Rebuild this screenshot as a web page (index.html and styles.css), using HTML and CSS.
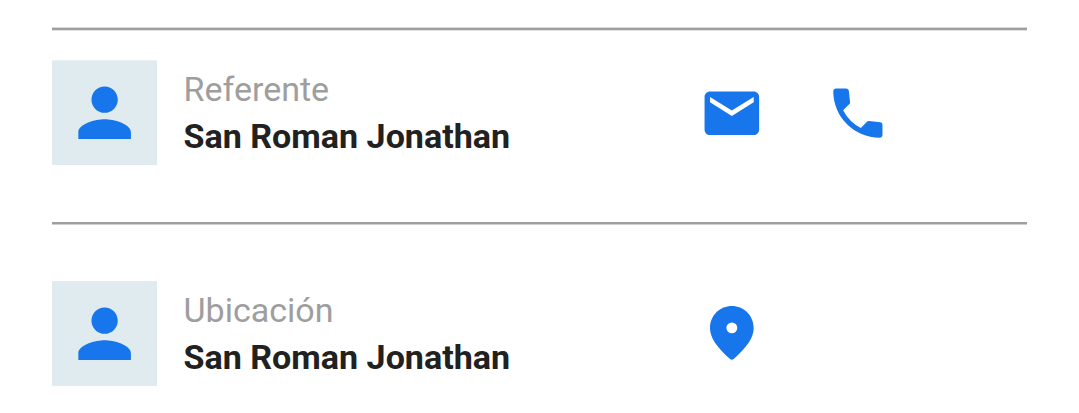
FILE: index.html
```html
<!DOCTYPE html>
<html lang="es">
<head>
<meta charset="utf-8">
<title>Contacto</title>
<link rel="stylesheet" href="styles.css">
</head>
<body>
<main class="list">
  <section class="row first">
    <div class="avatar"><svg class="icon person" viewBox="3.900 3.850 16 16"><path d="M12 12c2.210 0 4-1.790 4-4s-1.790-4-4-4-4 1.790-4 4 1.790 4 4 4zm0 2c-2.670 0-8 1.340-8 4v2h16v-2c0-2.660-5.330-4-8-4z"/></svg></div>
    <div class="info"><div class="label">Referente</div><div class="name">San Roman Jonathan</div></div>
    <div class="actions">
      <svg class="icon mail" viewBox="1.800 3.850 20 16"><path d="M20 4H4c-1.100 0-1.990.9-1.990 2L2 18c0 1.100.9 2 2 2h16c1.100 0 2-.9 2-2V6c0-1.100-.9-2-2-2zm0 4l-8 5-8-5V6l8 5 8-5v2z"/></svg>
      <svg class="icon phone" viewBox="2.900 2.800 18 18"><path d="M4 3H7.700c.5 0 .93.35.98.82L9.150 8c.04.25-.05.5-.24.68L6.600 10.900a15 15 0 0 0 6.500 6.500l2.300-2.300c.18-.18.43-.27.68-.24l4.100.5c.47.05.82.45.82.92V20c0 .55-.45 1-1 1C10.600 21 3 13.400 3 4c0-.55.45-1 1-1z"/></svg>
    </div>
  </section>
  <section class="row last">
    <div class="avatar"><svg class="icon person" viewBox="3.900 3.850 16 16"><path d="M12 12c2.210 0 4-1.790 4-4s-1.790-4-4-4-4 1.790-4 4 1.790 4 4 4zm0 2c-2.670 0-8 1.340-8 4v2h16v-2c0-2.660-5.330-4-8-4z"/></svg></div>
    <div class="info"><div class="label">Ubicación</div><div class="name">San Roman Jonathan</div></div>
    <div class="actions">
      <svg class="icon pin" viewBox="4 2 16 20"><path d="M12 2c-4.200 0-8 3.220-8 8.200 0 3.180 2.450 6.920 7.340 11.230.38.330.95.330 1.330 0C17.550 17.120 20 13.380 20 10.200 20 5.220 16.200 2 12 2zm0 10a2 2 0 1 1 0-4 2 2 0 0 1 0 4z"/></svg>
    </div>
  </section>
</main>
</body>
</html>
```
FILE: styles.css
```css
body {
  margin: 0;
  background: #fff;
  font-family: Roboto, sans-serif;
}
.list {
  height: 413px;
  box-sizing: border-box;
  padding: 27px 52px 0;
  overflow: hidden;
}
.row {
  box-sizing: border-box;
  height: 195px;
  display: flex;
  align-items: flex-start;
}
.first {
  padding-top: 33px;
  background: linear-gradient(#d8d8d8 1px, #9e9e9e 1px 3px, #e4e4e4 3px) 0 0 / 100% 4px no-repeat;
}
.last {
  padding-top: 59px;
  background: linear-gradient(#9e9e9e 2px, #cfcfcf 2px) 0 0 / 100% 3px no-repeat;
}
.avatar {
  width: 105px;
  height: 105px;
  display: flex;
  align-items: center;
  justify-content: center;
  background: #dfebef;
}
.first .avatar {
  background: linear-gradient(#eaf2f5 1px, #dfebef 1px);
}
.icon {
  display: block;
  overflow: visible;
  fill: #1776eb;
}
.person { width: 52.600px; height: 52.600px; }
.info {
  width: 520.500px;
  padding: 6px 0 0 26.500px;
  white-space: nowrap;
}
.label {
  font-size: 34px;
  line-height: 47px;
  color: #9e9e9e;
}
.name {
  font-size: 34.070px;
  line-height: 47px;
  font-weight: 700;
  color: #212121;
}
.actions {
  height: 106px;
  display: flex;
  align-items: center;
  gap: 74px;
}
.mail { width: 54.600px; height: 43.700px; }
.phone { width: 49.200px; height: 49.200px; }
.last .actions { height: 104px; }
.pin { width: 43.700px; height: 54.600px; margin-left: 5.500px; }
```
